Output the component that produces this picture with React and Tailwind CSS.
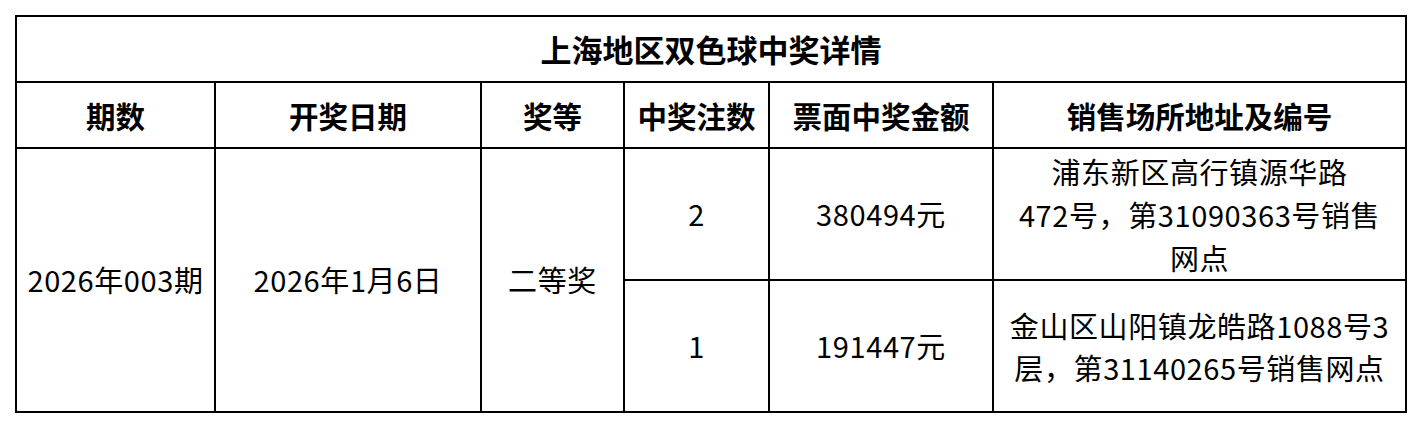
export default function App() {
    const font = { fontFamily: '"Microsoft YaHei", "Noto Sans CJK SC", "Noto Sans", sans-serif' };
    const th = 'border-2 border-black text-center align-middle font-bold text-[29.5px] p-0';
    const td = 'border-2 border-black text-center align-middle text-[29px] tracking-[0.6px] p-0';

    return (
        <main className="min-h-screen bg-white text-black" style={font}>
            <div className="pl-[15px] pt-[15px]">
                <table className="table-fixed border-collapse w-[1390px]">
                    <colgroup>
                        <col className="w-[199px]" />
                        <col className="w-[266px]" />
                        <col className="w-[143px]" />
                        <col className="w-[145px]" />
                        <col className="w-[224px]" />
                        <col className="w-[413px]" />
                    </colgroup>
                    <tbody>
                        <tr className="h-[66px]">
                            <th colSpan={6} className="border-2 border-black text-center align-middle font-bold text-[31px] p-0">
                                上海地区双色球中奖详情
                            </th>
                        </tr>
                        <tr className="h-[66px]">
                            <th className={th}>期数</th>
                            <th className={th}>开奖日期</th>
                            <th className={th}>奖等</th>
                            <th className={th}>中奖注数</th>
                            <th className={th}>票面中奖金额</th>
                            <th className={th}>销售场所地址及编号</th>
                        </tr>
                        <tr className="h-[132px]">
                            <td rowSpan={2} className={td}>2026年003期</td>
                            <td rowSpan={2} className={td}>2026年1月6日</td>
                            <td rowSpan={2} className={td}>二等奖</td>
                            <td className={td}>2</td>
                            <td className={td}>380494元</td>
                            <td className={`${td} leading-[43px]`}>
                                <span className="block whitespace-nowrap">浦东新区高行镇源华路</span>
                                <span className="block whitespace-nowrap">472号，第31090363号销售</span>
                                <span className="block whitespace-nowrap">网点</span>
                            </td>
                        </tr>
                        <tr className="h-[132px]">
                            <td className={td}>1</td>
                            <td className={td}>191447元</td>
                            <td className={`${td} leading-[42px]`}>
                                <span className="block whitespace-nowrap">金山区山阳镇龙皓路1088号3</span>
                                <span className="block whitespace-nowrap">层，第31140265号销售网点</span>
                            </td>
                        </tr>
                    </tbody>
                </table>
            </div>
        </main>
    );
}
